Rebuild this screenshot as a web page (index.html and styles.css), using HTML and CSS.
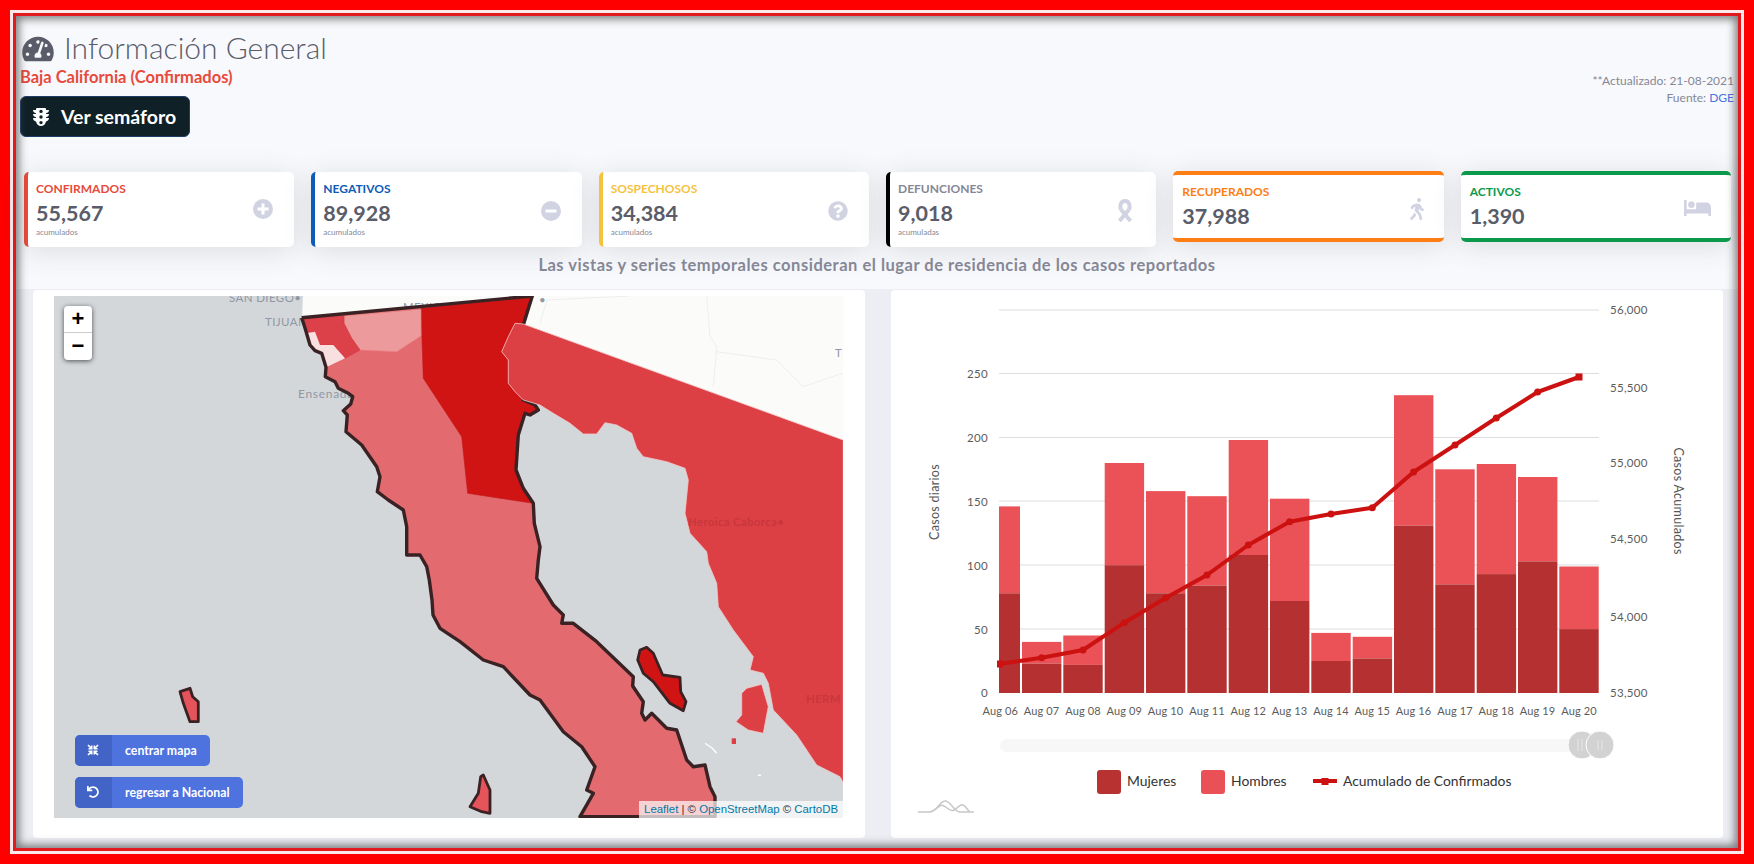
FILE: index.html
```html
<!DOCTYPE html>
<html lang="es">
<head>
<meta charset="utf-8">
<title>Información General</title>
<link rel="stylesheet" href="styles.css">
</head>
<body>
<div class="frame-outer"><div class="frame-mid"><div class="frame-inner">
  <section class="top">
    <header class="head">
      <div class="head-left">
        <h1 class="title">
          <svg class="title-icon" viewBox="0 0 576 512"><path d="M288 32C128.94 32 0 160.94 0 320c0 52.8 14.25 102.26 39.06 144.8 5.61 9.62 16.3 15.2 27.44 15.2h443c11.14 0 21.83-5.58 27.44-15.2C561.75 422.26 576 372.8 576 320c0-159.06-128.94-288-288-288zm0 64c14.71 0 26.58 10.13 30.32 23.65-1.11 2.26-2.64 4.23-3.45 6.67l-9.22 27.67c-5.13 3.49-10.97 6.01-17.64 6.01-17.67 0-32-14.33-32-32S270.33 96 288 96zM96 384c-17.67 0-32-14.33-32-32s14.33-32 32-32 32 14.33 32 32-14.33 32-32 32zm48-160c-17.67 0-32-14.33-32-32s14.33-32 32-32 32 14.33 32 32-14.33 32-32 32zm246.77-72.41l-61.33 184C343.13 347.33 352 364.54 352 384c0 11.72-3.38 22.55-8.88 32H232.88c-5.5-9.45-8.88-20.28-8.88-32 0-33.94 26.5-61.43 59.9-63.59l61.34-184.01c4.17-12.56 17.73-19.45 30.36-15.17 12.57 4.19 19.35 17.79 15.17 30.36zm14.66 57.2l15.52-46.55c3.47-1.29 7.13-2.23 11.05-2.23 17.67 0 32 14.33 32 32s-14.33 32-32 32c-11.38-.01-20.89-6.28-26.57-15.22zM480 384c-17.67 0-32-14.33-32-32s14.33-32 32-32 32 14.33 32 32-14.33 32-32 32z"/></svg>
          <span class="title-text">Información General</span>
        </h1>
        <div class="subtitle">Baja California (Confirmados)</div>
        <a class="semaforo">
          <svg class="semaforo-icon" viewBox="0 0 16 18"><path fill-rule="evenodd" d="M4 0h8a1 1 0 0 1 1 1v1h3c0 1.8-1.3 3-3 3.2V6h3c0 1.8-1.3 3-3 3.2V10h3c0 1.8-1.3 3.2-3 3.4C12.600 16 10.600 18 8 18s-4.600-2-5-4.600C1.300 13.200 0 11.800 0 10h3v-.8C1.300 9 0 7.800 0 6h3v-.8C1.300 5 0 3.800 0 2h3V1a1 1 0 0 1 1-1zM8 1.700a1.700 1.700 0 1 0 0 3.400 1.700 1.700 0 0 0 0-3.400zm0 5.600a1.700 1.700 0 1 0 0 3.400 1.700 1.700 0 0 0 0-3.400zm0 5.600a1.700 1.700 0 1 0 0 3.400 1.700 1.700 0 0 0 0-3.400z"/></svg>
          <span>Ver semáforo</span>
        </a>
      </div>
      <div class="meta">
        <div>**Actualizado: 21-08-2021</div>
        <div>Fuente: <a class="meta-link">DGE</a></div>
      </div>
    </header>

    <div class="cards">
      <article class="card side red">
        <div class="card-text"><div class="card-label">Confirmados</div><div class="card-num">55,567</div><div class="card-sub">acumulados</div></div>
        <svg class="ic ic-20 up" viewBox="0 0 20 20"><circle cx="10" cy="10" r="10"/><path class="knock" d="M8.500 4.500h3v4h4v3h-4v4h-3v-4h-4v-3h4z"/></svg>
      </article>
      <article class="card side blue">
        <div class="card-text"><div class="card-label">Negativos</div><div class="card-num">89,928</div><div class="card-sub">acumulados</div></div>
        <svg class="ic ic-20" viewBox="0 0 20 20"><circle cx="10" cy="10" r="10"/><rect class="knock" x="4.500" y="8.500" width="11" height="3" rx=".6"/></svg>
      </article>
      <article class="card side yellow">
        <div class="card-text"><div class="card-label">Sospechosos</div><div class="card-num">34,384</div><div class="card-sub">acumulados</div></div>
        <svg class="ic ic-20" viewBox="0 0 512 512"><path d="M504 256c0 136.997-111.043 248-248 248S8 392.997 8 256C8 119.083 119.043 8 256 8s248 111.083 248 248zM262.655 90c-54.497 0-89.255 22.957-116.549 63.758-3.536 5.286-2.353 12.415 2.715 16.258l34.699 26.31c5.205 3.947 12.621 3.008 16.665-2.122 17.864-22.658 30.113-35.797 57.303-35.797 20.429 0 45.698 13.148 45.698 32.958 0 14.976-12.363 22.667-32.534 33.976C247.128 238.528 216 254.941 216 296v4c0 6.627 5.373 12 12 12h56c6.627 0 12-5.373 12-12v-1.333c0-28.462 83.186-29.647 83.186-106.667 0-58.002-60.165-102-116.531-102zM256 338c-25.365 0-46 20.635-46 46 0 25.364 20.635 46 46 46s46-20.636 46-46c0-25.365-20.635-46-46-46z"/></svg>
      </article>
      <article class="card side black">
        <div class="card-text"><div class="card-label">Defunciones</div><div class="card-num">9,018</div><div class="card-sub">acumuladas</div></div>
        <svg class="ic ic-ribbon" viewBox="0 0 20 24"><g class="ribbon"><path d="M6 10.500C4.800 8.500 5 2 10 2s5.200 6.500 4 8.500"/><path d="M6 10.500L15.500 22"/><path d="M14 10.500L4.500 22"/></g></svg>
      </article>
      <article class="card band orange">
        <div class="card-text"><div class="card-label">Recuperados</div><div class="card-num">37,988</div></div>
        <svg class="ic ic-walk" viewBox="0 0 320 512"><path d="M208 96c26.500 0 48-21.500 48-48S234.500 0 208 0s-48 21.500-48 48 21.500 48 48 48zm94.500 149.100l-23.300-11.800-9.700-29.400c-14.700-44.600-55.700-75.800-102.200-75.900-36-.1-55.900 10.100-93.300 25.200-21.600 8.700-39.300 25.200-49.700 46.200L17.600 213c-7.800 15.800-1.500 35 14.200 42.900 15.600 7.900 34.600 1.500 42.500-14.300L81 228c3.500-7 9.300-12.500 16.500-15.400l26.800-10.800-15.200 60.700c-5.200 20.800.4 42.900 14.900 58.800l59.900 65.400c7.200 7.900 12.300 17.400 14.900 27.700l18.300 73.300c4.300 17.100 21.700 27.600 38.800 23.300 17.100-4.300 27.600-21.700 23.300-38.800l-22.200-89c-2.600-10.300-7.700-19.900-14.900-27.700l-45.500-49.700 17.200-68.700 5.500 16.500c5.300 16.100 16.700 29.400 31.700 37l23.300 11.800c15.600 7.900 34.600 1.500 42.500-14.300 7.700-15.700 1.400-35.100-14.300-43zM73.600 385.800c-3.200 8.100-8 15.400-14.200 21.500l-50 50.100c-12.500 12.500-12.500 32.800 0 45.300s32.700 12.500 45.200 0l59.400-59.400c6.100-6.100 10.900-13.400 14.200-21.500l13.500-33.800c-55.300-60.300-38.700-41.800-47.400-53.700l-20.700 51.500z"/></svg>
      </article>
      <article class="card band green">
        <div class="card-text"><div class="card-label">Activos</div><div class="card-num">1,390</div></div>
        <svg class="ic ic-bed" viewBox="0 0 640 512"><path d="M176 256c44.110 0 80-35.890 80-80s-35.890-80-80-80-80 35.890-80 80 35.890 80 80 80zm352-128H304c-8.840 0-16 7.160-16 16v144H64V80c0-8.840-7.160-16-16-16H16C7.160 64 0 71.160 0 80v352c0 8.840 7.160 16 16 16h32c8.840 0 16-7.160 16-16v-48h512v48c0 8.840 7.160 16 16 16h32c8.840 0 16-7.160 16-16V240c0-61.860-50.140-112-112-112z"/></svg>
      </article>
    </div>

    <p class="note">Las vistas y series temporales consideran el lugar de residencia de los casos reportados</p>
  </section>

  <section class="bottom">
    <div class="panel panel-map">
      <div class="map">
        <svg class="map-svg" viewBox="54 296 789 522" preserveAspectRatio="none">
          <polygon class="land" points="303,296 843,296 843,445 515,323 302,318"/>
          <g class="roads">
            <polyline points="706.700,296 710,336.700 716.700,346.700 713.300,386.700"/>
            <polyline points="716.700,351.700 776.700,360 803.300,386.700 843,373"/>
            <polyline points="540,323 547,300 630,296"/>
          </g>
          <g class="lbl">
            <text x="229" y="302">SAN DIEGO•</text>
            <text x="265" y="326">TIJUANA</text>
            <text x="403" y="311">MEXICALI</text>
            <text class="lbl-low" x="298" y="398">Ensenada</text>
            <text x="835" y="357">TI</text>
            <text x="539" y="304">•</text>
          </g>
          <polygon class="state" points="301.700,317.700 305,328 310,345 315,350.700 321.700,353.300 326,367.300 325.300,376.700 335,381.700 338.300,388.300 348.300,393.300 352.700,396.700 350.700,404 343.300,410.700 347.300,415 346,431.700 361.700,445 376.700,466.700 380,476.700 377.300,491.700 388.300,500 403.300,510 406.700,526.700 406.700,555 420,555 426.700,566.700 429.300,580 432,600 433,615 440,628.300 460,641.700 483.300,660 503.300,666.700 530,695 540,700 563.300,731.700 581.700,746.700 595,766.700 586.700,790 593.300,793.300 580,816.700 715,816.700 715,796.700 710,786.700 705,765 693.300,766.700 686.700,760 676.700,730 666.700,728.300 651.700,713.300 645,720 641.700,713.300 643.300,701.700 632.700,686 633.300,676.700 596.700,641.700 573.300,623.300 561.700,623.300 563.300,615 553.300,605 536.700,578.300 538.300,560 540,546.700 534.300,523.300 533.300,503.300 523.300,488.300 516,470 518.300,435 525,413.300 530,415 538.300,410 535,405 523.300,400 523.300,325 532.300,296"/>
          <polygon class="m-dark" points="421,308.300 532.300,296 523.300,325 523.300,400 535,405 538.300,410 530,415 525,413.300 518.300,435 516,470 523.300,488.300 533.300,503.300 467.700,493.300 461.700,436.700 423.300,378.300"/>
          <polygon class="m-pale" points="344,316 421,309.300 421,336 396.700,351.700 360,350 351.700,338.300 344,323.300"/>
          <polygon class="m-mid" points="302,318 344,316 344,323.300 351.700,338.300 360,350 345,358.300 333.300,345 320,345 311.700,331.700 306,331.700"/>
          <polygon class="m-light" points="306.700,333.300 315,331.700 320,345 333.300,345 345,358.300 327.300,366.700 321.700,353.300 315,350.700 310,345"/>
          <polyline class="coast" points="301.700,317.700 305,328 310,345 315,350.700 321.700,353.300 326,367.300 325.300,376.700 335,381.700 338.300,388.300 348.300,393.300 352.700,396.700 350.700,404 343.300,410.700 347.300,415 346,431.700 361.700,445 376.700,466.700 380,476.700 377.300,491.700 388.300,500 403.300,510 406.700,526.700 406.700,555 420,555 426.700,566.700 429.300,580 432,600 433,615 440,628.300 460,641.700 483.300,660 503.300,666.700 530,695 540,700 563.300,731.700 581.700,746.700 595,766.700 586.700,790 593.300,793.300 580,816.700 715,816.700 715,796.700 710,786.700 705,765 693.300,766.700 686.700,760 676.700,730 666.700,728.300 651.700,713.300 645,720 641.700,713.300 643.300,701.700 632.700,686 633.300,676.700 596.700,641.700 573.300,623.300 561.700,623.300 563.300,615 553.300,605 536.700,578.300 538.300,560 540,546.700 534.300,523.300 533.300,503.300 523.300,488.300 516,470 518.300,435 525,413.300 530,415 538.300,410 535,405 523.300,400 523.300,325 532.300,296 301.700,317.700"/>
          <polygon class="sonora" points="515,323.300 523.300,324 843.300,440 843.300,783 840,776.700 816.700,765 796.700,735 773.300,710 768.300,683.300 763.300,673.300 750,670 753.300,656.700 733.300,630 718.300,606.700 716.700,583.300 708.300,563.300 706.700,551.700 690,533.300 685,513.300 688.300,480 685,468.300 666.700,461.700 643.300,456.700 636.700,448.300 631.700,433.300 616.700,425 605,422.700 596.700,434 583.300,434 570,423.300 553.300,413.300 540,405 523.300,400 515,391.700 508.300,383.300 508.300,360 501.700,351.700 508.300,336.700"/>
          <polygon class="sonora" points="741.700,693.300 746.700,688.300 761.700,684.300 768.300,706.700 763.300,733.300 748.300,730 736,721.700 741.700,715"/>
          <rect class="sonora-dot" x="731.700" y="738.300" width="4.300" height="5.700"/>
          <polyline class="sliver" points="705,743.300 712,748 716.700,753.300"/>
          <polyline class="sliver" points="758,775 761,775.500"/>
          <polygon class="isle-dark" points="640,650 646.700,647.300 653.300,653.300 662.700,675 680,677.300 680.700,691.700 686,701.700 683.300,710.700 670,703.300 653.300,681.700 643.300,673.300 637.700,660"/>
          <polygon class="isle-soft" points="483.300,775 490,790 490,813.300 481.700,811.700 470,806.700 478.300,793.300 480.700,776.700"/>
          <polygon class="isle-soft" points="180,691.700 190,688.300 192.700,696.700 198.300,701.700 198.300,721.700 190,721.700 183.300,703.300"/>
          <g class="lbl-red">
            <text x="688" y="526">Heroica Caborca•</text>
            <text x="806" y="703">HERM</text>
          </g>
        </svg>
        <div class="zoom-ctl">
          <a class="zoom-btn">+</a>
          <a class="zoom-btn">−</a>
        </div>
        <div class="map-actions">
          <a class="map-btn">
            <span class="map-btn-ic"><svg class="ic-white" viewBox="0 0 12 12"><g class="arrows"><path d="M1 1l3.500 3.500M4.700 1.500v3.200H1.500"/><path d="M11 1L7.500 4.500M7.300 1.500v3.200h3.200"/><path d="M1 11l3.500-3.500M4.700 10.500V7.300H1.500"/><path d="M11 11L7.500 7.500M7.300 10.500V7.300h3.200"/></g></svg></span>
            <span class="map-btn-txt">centrar mapa</span>
          </a>
          <a class="map-btn">
            <span class="map-btn-ic"><svg class="ic-white" viewBox="0 0 512 512"><path d="M212.333 224.333H12c-6.627 0-12-5.373-12-12V12C0 5.373 5.373 0 12 0h48c6.627 0 12 5.373 12 12v78.112C117.773 39.279 184.260 7.470 258.175 8.007c136.906.994 246.448 111.623 246.157 248.532C504.041 393.258 393.120 504 256.333 504c-64.089 0-122.496-24.313-166.510-64.215-5.099-4.622-5.334-12.554-.467-17.420l33.967-33.967c4.474-4.474 11.662-4.717 16.401-.525C170.760 415.336 211.580 432 256.333 432c97.268 0 176-78.716 176-176 0-97.267-78.716-176-176-176-58.496 0-110.280 28.476-142.274 72.333h98.274c6.627 0 12 5.373 12 12v48c0 6.627-5.373 12-12 12z"/></svg></span>
            <span class="map-btn-txt">regresar a Nacional</span>
          </a>
        </div>
        <div class="attrib"><a>Leaflet</a> | © <a>OpenStreetMap</a> © <a>CartoDB</a></div>
      </div>
    </div>

    <div class="panel panel-chart">
      <svg class="chart" viewBox="891 290 832 548">
        <g class="grid">
          <line x1="999" x2="1599" y1="310" y2="310"/>
          <line x1="999" x2="1599" y1="373.500" y2="373.500"/>
          <line x1="999" x2="1599" y1="437.500" y2="437.500"/>
          <line x1="999" x2="1599" y1="501" y2="501"/>
          <line x1="999" x2="1599" y1="565" y2="565"/>
          <line x1="999" x2="1599" y1="629" y2="629"/>
        </g>
        <g class="tick tick-end">
          <text x="988" y="377.500">250</text>
          <text x="988" y="441.500">200</text>
          <text x="988" y="505.500">150</text>
          <text x="988" y="569.500">100</text>
          <text x="988" y="633.500">50</text>
          <text x="988" y="697">0</text>
        </g>
        <g class="tick">
          <text x="1610" y="314">56,000</text>
          <text x="1610" y="391.500">55,500</text>
          <text x="1610" y="467">55,000</text>
          <text x="1610" y="543">54,500</text>
          <text x="1610" y="621">54,000</text>
          <text x="1610" y="697">53,500</text>
        </g>
        <g class="tick tick-mid">
          <text x="1000.300" y="715">Aug 06</text>
          <text x="1041.600" y="715">Aug 07</text>
          <text x="1083" y="715">Aug 08</text>
          <text x="1124.300" y="715">Aug 09</text>
          <text x="1165.600" y="715">Aug 10</text>
          <text x="1207" y="715">Aug 11</text>
          <text x="1248.300" y="715">Aug 12</text>
          <text x="1289.600" y="715">Aug 13</text>
          <text x="1331" y="715">Aug 14</text>
          <text x="1372.300" y="715">Aug 15</text>
          <text x="1413.600" y="715">Aug 16</text>
          <text x="1455" y="715">Aug 17</text>
          <text x="1496.300" y="715">Aug 18</text>
          <text x="1537.600" y="715">Aug 19</text>
          <text x="1579" y="715">Aug 20</text>
        </g>
        <text class="axis-name" transform="translate(939 502) rotate(-90)">Casos diarios</text>
        <text class="axis-name" transform="translate(1674 501) rotate(90)">Casos Acumulados</text>
        <g class="bar-h">
          <rect x="999" y="506.400" width="21" height="86.900"/>
          <rect x="1022" y="641.900" width="39.400" height="21.700"/>
          <rect x="1063.300" y="635.500" width="39.400" height="29.400"/>
          <rect x="1104.700" y="463" width="39.400" height="102.200"/>
          <rect x="1146" y="491.100" width="39.400" height="102.200"/>
          <rect x="1187.300" y="496.200" width="39.400" height="89.400"/>
          <rect x="1228.700" y="440" width="39.400" height="115"/>
          <rect x="1270" y="498.700" width="39.400" height="102.300"/>
          <rect x="1311.300" y="632.900" width="39.400" height="28.100"/>
          <rect x="1352.700" y="636.800" width="39.400" height="21.700"/>
          <rect x="1394" y="395.200" width="39.400" height="130.400"/>
          <rect x="1435.300" y="469.300" width="39.400" height="115.100"/>
          <rect x="1476.700" y="464" width="39.400" height="110.100"/>
          <rect x="1518" y="477" width="39.400" height="84.400"/>
          <rect x="1559.300" y="566.500" width="39.400" height="62.600"/>
        </g>
        <g class="bar-m">
          <rect x="999" y="593.300" width="21" height="99.700"/>
          <rect x="1022" y="663.600" width="39.400" height="29.400"/>
          <rect x="1063.300" y="664.900" width="39.400" height="28.100"/>
          <rect x="1104.700" y="565.200" width="39.400" height="127.800"/>
          <rect x="1146" y="593.300" width="39.400" height="99.700"/>
          <rect x="1187.300" y="585.600" width="39.400" height="107.400"/>
          <rect x="1228.700" y="555" width="39.400" height="138"/>
          <rect x="1270" y="601" width="39.400" height="92"/>
          <rect x="1311.300" y="661" width="39.400" height="32"/>
          <rect x="1352.700" y="658.500" width="39.400" height="34.500"/>
          <rect x="1394" y="525.600" width="39.400" height="167.400"/>
          <rect x="1435.300" y="584.400" width="39.400" height="108.600"/>
          <rect x="1476.700" y="574.100" width="39.400" height="118.900"/>
          <rect x="1518" y="561.400" width="39.400" height="131.600"/>
          <rect x="1559.300" y="629.100" width="39.400" height="63.900"/>
        </g>
        <polyline class="acc" points="999,664 1041.600,657.700 1083,650 1124.300,622.700 1165.600,598 1207,575 1248.300,545 1289.600,521.700 1331,514 1372.300,507.700 1413.600,472 1455,445 1496.300,418 1537.600,392 1579,377"/>
        <g class="acc-dot">
          <circle cx="1041.600" cy="657.700" r="3.500"/>
          <circle cx="1083" cy="650" r="3.500"/>
          <circle cx="1124.300" cy="622.700" r="3.500"/>
          <circle cx="1165.600" cy="598" r="3.500"/>
          <circle cx="1207" cy="575" r="3.500"/>
          <circle cx="1248.300" cy="545" r="3.500"/>
          <circle cx="1289.600" cy="521.700" r="3.500"/>
          <circle cx="1331" cy="514" r="3.500"/>
          <circle cx="1372.300" cy="507.700" r="3.500"/>
          <circle cx="1413.600" cy="472" r="3.500"/>
          <circle cx="1455" cy="445" r="3.500"/>
          <circle cx="1496.300" cy="418" r="3.500"/>
          <circle cx="1537.600" cy="392" r="3.500"/>
          <rect x="1575.500" y="373.500" width="7" height="7"/>
          <rect x="997" y="660.500" width="6" height="7"/>
        </g>
        <rect class="slider" x="1000" y="739" width="590" height="13" rx="6.500"/>
        <circle class="handle" cx="1582" cy="745" r="14"/>
        <circle class="handle" cx="1600" cy="745" r="14"/>
        <path class="handle-mark" d="M1578 739v12M1582 739v12M1598 740v10M1602 740v10"/>
        <rect class="swatch-m" x="1097" y="770" width="24" height="24" rx="3"/>
        <text class="legend" x="1127" y="786">Mujeres</text>
        <rect class="swatch-h" x="1201" y="770" width="24" height="24" rx="3"/>
        <text class="legend" x="1231" y="786">Hombres</text>
        <line class="swatch-l" x1="1313" x2="1337" y1="781" y2="781"/>
        <rect class="swatch-d" x="1321.500" y="778" width="7" height="7"/>
        <text class="legend" x="1343" y="786">Acumulado de Confirmados</text>
        <path class="logo" d="M918 812h12c6 0 10-11 15-11 6 0 9 11 15 11h14"/>
        <path class="logo" d="M930 812c8-2 9-9 14-6 4 2 6 6 10 4 5-3 6-6 9-5 3 1 4 5 7 7"/>
      </svg>
    </div>
  </section>
  <div class="inset-shade"></div>
</div></div></div>
</body>
</html>
```

FILE: styles.css
```css
* { box-sizing: border-box; }
html, body { margin: 0; padding: 0; height: 864px; overflow: hidden; background: #fff; }
body { font-family: "Lato", "Noto Sans", sans-serif; color: #5a5c69; }

.frame-outer { width: 1754px; height: 864px; border: 10px solid #ff0000; }
.frame-mid { height: 100%; border: 3px solid #fbe9e9; }
.frame-inner { position: relative; height: 100%; border: 3px solid #e11a1f; display: flex; flex-direction: column; background: #eceef4; }
.inset-shade { position: absolute; inset: 0; pointer-events: none; box-shadow: inset 0 0 8px 3px rgba(70,70,70,.7); }

.top { flex: 0 0 273px; background: #f8f9fc; padding: 0 4px 0 4px; }
.head { display: flex; justify-content: space-between; height: 155px; padding-top: 15px; }
.title { display: flex; align-items: center; gap: 10px; margin: 0 0 0 2px; height: 36px; font-size: 30px; font-weight: 300; line-height: 36px; color: #5a5c69; }
.title-text { margin-bottom: 4px; }
.title-icon { width: 32px; height: 28px; fill: #5a5c69; }
.subtitle { height: 20px; margin-top: 0; font-size: 16.500px; line-height: 20px; font-weight: 700; color: #e74a3b; }
.semaforo { display: inline-flex; align-items: center; gap: 12px; width: 170px; height: 41px; margin-top: 9px; padding-left: 12px; background: #0f2027; border: 1px solid #1d3d6b; border-radius: 6px; color: #fff; font-size: 19.500px; font-weight: 700; }
.semaforo-icon { width: 16px; height: 18px; fill: #fff; }
.meta { padding-top: 41px; text-align: right; font-size: 12px; line-height: 17px; color: #858796; }
.meta-link { color: #4e73df; }

.cards { display: grid; grid-template-columns: repeat(6, 1fr); column-gap: 17px; align-items: start; margin: 0 3px 0 4px; }
.card { display: flex; justify-content: space-between; background: #fff; border-radius: 5px; box-shadow: 0 4px 28px rgba(58,59,69,.15); border: 0 solid; align-items: flex-start; }
.card.side { height: 75px; margin-top: 1px; border-left-width: 4px; padding: 9px 21px 0 8px; }
.card.band { height: 71px; border-top-width: 4px; border-bottom-width: 4px; padding: 9px 20px 0 9px; }
.card-label { font-size: 12px; line-height: 16px; font-weight: 700; text-transform: uppercase; }
.card-num { margin-top: 3px; font-size: 21.500px; line-height: 27px; font-weight: 700; color: #5a5c69; }
.card-sub { font-size: 8px; line-height: 10px; color: #858796; }
.red { border-color: #e74a3b; } .red .card-label { color: #e74a3b; }
.blue { border-color: #0d5cb8; } .blue .card-label { color: #0d5cb8; }
.yellow { border-color: #f6c23e; } .yellow .card-label { color: #f6c23e; }
.black { border-color: #000; } .black .card-label { color: #858796; }
.orange { border-color: #fd7e14; } .orange .card-label { color: #fd7e14; }
.green { border-color: #0b9a4b; } .green .card-label { color: #0b9a4b; }

.ic { fill: #d1d3e2; flex: none; }
.ic-20 { width: 20px; height: 20px; margin-top: 20px; }
.ic-20.up { margin-top: 18px; }
.knock { fill: #fff; }
.ic-ribbon { width: 20px; height: 24px; margin-top: 18px; }
.ribbon { fill: none; stroke: #d1d3e2; stroke-width: 4; }
.ic-walk { width: 14px; height: 22px; margin-top: 14px; }
.ic-bed { width: 27px; height: 22px; margin-top: 13px; }

.note { margin: 8px 0 0; text-align: center; font-size: 16.500px; letter-spacing: .52px; line-height: 20px; font-weight: 700; color: #858796; }

.bottom { flex: 1; display: grid; grid-template-columns: 1fr 1fr; gap: 26px; padding: 1px 15px 10px 17px; min-height: 0; }
.panel { background: #fff; border-radius: 4px; min-width: 0; min-height: 0; }
.panel-map { padding: 6px 22px 20px 21px; }
.map { position: relative; height: 100%; overflow: hidden; background: #d4d7da; }
.map-svg { display: block; width: 100%; height: 100%; }
.land { fill: #fbfbfa; }
.roads polyline { fill: none; stroke: #eeeeec; stroke-width: 1; }
.lbl text { font-size: 11.500px; fill: #8f98a5; letter-spacing: .4px; }
.lbl .lbl-low { font-size: 12px; letter-spacing: .7px; }
.state { fill: #e36a6f; }
.m-dark { fill: #d01414; stroke: #c01818; stroke-width: .6; }
.m-pale { fill: #ec9a9c; stroke: #e87f82; stroke-width: .6; }
.m-mid { fill: #dc4048; stroke: #d2383f; stroke-width: .6; }
.m-light { fill: #f9e0e0; }
.coast { fill: none; stroke: #3a2224; stroke-width: 3.400; stroke-linejoin: round; }
.sonora { fill: #dc4045; stroke: #f3c9ca; stroke-width: .8; }
.sonora-dot { fill: #dc4045; }
.sliver { fill: none; stroke: #fff; stroke-width: 1.300; }
.isle-dark { fill: #d01414; stroke: #3a2224; stroke-width: 2.800; stroke-linejoin: round; }
.isle-soft { fill: #e5545a; stroke: #3a2224; stroke-width: 2.800; stroke-linejoin: round; }
.lbl-red text { font-size: 11.500px; font-weight: 700; fill: #c9363c; letter-spacing: .3px; }

.zoom-ctl { position: absolute; left: 10px; top: 10px; width: 28px; height: 54px; background: #fff; border-radius: 4px; box-shadow: 0 1px 5px rgba(0,0,0,.65); }
.zoom-btn { display: block; height: 27px; text-align: center; font-family: "Liberation Sans", sans-serif; font-size: 22px; font-weight: 700; line-height: 26px; color: #000; }
.zoom-btn:first-child { border-bottom: 1px solid #ccc; }

.map-actions { position: absolute; left: 21px; bottom: 10px; display: flex; flex-direction: column; align-items: flex-start; gap: 11px; }
.map-btn { display: flex; align-items: center; height: 31px; background: #4e73df; border-radius: 5px; overflow: hidden; color: #fff; font-size: 12.300px; font-weight: 700; }
.map-btn-ic { display: flex; align-items: center; justify-content: center; width: 37px; height: 100%; background: #4264c6; }
.ic-white { width: 12px; height: 12px; fill: #fff; margin-left: -1px; margin-top: -2px; }
.arrows { fill: none; stroke: #fff; stroke-width: 1.600; }
.map-btn-txt { padding: 0 13px; }

.attrib { position: absolute; right: 0; bottom: 0; height: 17px; padding: 0 5px 0 5px; background: rgba(255,255,255,.7); font-family: "Liberation Sans", sans-serif; font-size: 11.400px; line-height: 17px; color: #333; }
.attrib a { color: #0078a8; }

.chart { display: block; width: 100%; height: 100%; }
.grid line { stroke: #dcdde0; stroke-width: 1.200; }
.tick text { font-size: 11.500px; fill: #5c5c5c; letter-spacing: .3px; }
.tick-end text { text-anchor: end; }
.tick.tick-mid text { text-anchor: middle; font-size: 11px; letter-spacing: .15px; }
.axis-name { font-size: 12.500px; fill: #555; text-anchor: middle; letter-spacing: .3px; }
.bar-h rect { fill: #e94b50; fill-opacity: .96; }
.bar-m rect { fill: #b42c2c; fill-opacity: .98; }
.acc { fill: none; stroke: #cc1111; stroke-width: 4; stroke-linejoin: round; }
.acc-dot circle, .acc-dot rect { fill: #cc1111; }
.slider { fill: #f7f7f7; }
.handle { fill: #d2d2d2; stroke: #fff; stroke-width: 1; }
.handle-mark { fill: none; stroke: #e6e6e6; stroke-width: 1; }
.swatch-m { fill: #b83232; }
.swatch-h { fill: #ea5156; }
.swatch-l { stroke: #cc1111; stroke-width: 4; }
.swatch-d { fill: #cc1111; }
.legend { font-size: 13.900px; fill: #333; }
.logo { fill: none; stroke: #c8c8c8; stroke-width: 1.500; }
```
